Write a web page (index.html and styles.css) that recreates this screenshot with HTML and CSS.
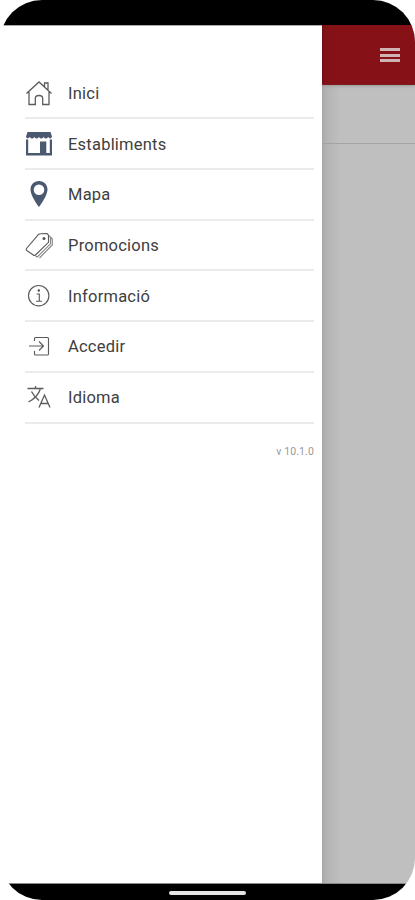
FILE: index.html
```html
<!DOCTYPE html>
<html lang="ca">
<head>
<meta charset="utf-8">
<title>Menú</title>
<link rel="stylesheet" href="styles.css">
</head>
<body>
<div class="phone">
  <div class="status"></div>
  <div class="screen">
    <nav class="drawer">
      <ul class="menu">
        <li><svg viewBox="0 0 28 28"><path d="M1.500 14.500 14 3l12.500 11.500M4 13v12.500h6.300v-6q0-3 3.700-3t3.700 3v6H24V13M19.500 7.500V4h3.500v6.500"/></svg><span>Inici</span></li>
        <li><svg viewBox="0 0 28 28"><path class="solid" d="M2.500 2h23l1.500 4.500q-1.200 3.500-3.800.5-2.400 3-4.600 0-2.300 3-4.600 0-2.300 3-4.600 0-2.200 3-4.600 0-2.600 3-3.800-.5zM1 9.500h2.200v13.500H15V11.500h6.300V23h3.500V9.500H27v16H1z"/></svg><span>Establiments</span></li>
        <li><svg viewBox="0 0 28 28"><path class="solid" fill-rule="evenodd" d="M14 1C8.800 1 5.500 4.800 5.500 9.500 5.500 16 14 27 14 27s8.500-11 8.500-17.500C22.500 4.800 19.200 1 14 1zm0 3.500a5.300 5.300 0 1 1 0 10.600 5.300 5.300 0 0 1 0-10.600z"/></svg><span>Mapa</span></li>
        <li><svg class="thin" viewBox="0 0 28 28"><path d="M1.500 17.500 13.500 3.500q.8-.8 1.700-.8l6.800-.2 1.500 1.800v7L10.500 24q-1 1-2.200 0l-6.500-4.500q-1-.8-.3-2z"/><path class="faint" d="M24 4.500l1.500 1.800v6.500L12.300 26l-1.800-1M26 6.500l1.300 1.500v6L14.500 27"/><circle class="dot" cx="19" cy="7.500" r="1.500"/></svg><span>Promocions</span></li>
        <li><svg class="thin" viewBox="0 0 28 28"><circle cx="13.700" cy="13.700" r="10.200"/><path d="M11.500 12h2.800v7M11 19.200h6"/><circle class="dot" cx="13.800" cy="8.500" r="1.200"/></svg><span>Informació</span></li>
        <li><svg class="thin" viewBox="0 0 28 28"><path d="M9.500 9V6.500q0-1 1-1h12q1 0 1 1v15.500q0 1-1 1h-12q-1 0-1-1v-3M4 14h14.500M14 9.500l4.500 4.500-4.500 4.500"/></svg><span>Accedir</span></li>
        <li><svg viewBox="0 0 28 28"><path d="M2.500 5.500h16M10.500 3v2.500M15.500 5.500Q13 14 3.500 19M6.500 8.500q2.500 5 7.500 9M14 24.500l5.500-12.500L25 24.500M16 20.500h7.200"/></svg><span>Idioma</span></li>
      </ul>
      <div class="version">v 10.1.0</div>
    </nav>
    <main class="page">
      <header><div class="burger"><i></i><i></i><i></i></div></header>
      <div class="filter"></div>
    </main>
  </div>
  <div class="navbar"><div class="handle"></div></div>
</div>
</body>
</html>
```
FILE: styles.css
```css
* { box-sizing: border-box; }
body { margin: 0; background: #fff; font-family: Roboto, sans-serif; }
.phone { width: 415px; height: 900px; border-radius: 42px; overflow: hidden; display: flex; flex-direction: column; }
.status { height: 25px; background: #000; flex: none; }
.screen { flex: 1; display: flex; border-bottom: 1px solid #888; }
.drawer { width: 322px; background: #fff; border-top: 1px solid #aaa; padding: 42.700px 8px 0 25px; }
.menu { list-style: none; margin: 0; padding: 0; }
.menu li { height: 50.700px; border-bottom: 2px solid #ebebeb; display: flex; align-items: center; gap: 15px; color: #404040; font-size: 16.500px; letter-spacing: .22px; }
.menu li span { padding-top: 1px; }
.menu svg { width: 28px; height: 28px; fill: none; stroke: #5c5c5c; stroke-width: 1.300; flex: none; }
.menu .thin { stroke-width: 1.150; }
.menu .faint { stroke: #888; }
.menu .solid { fill: #4a5870; stroke: none; }
.menu .dot { fill: #505050; stroke: none; }
.version { margin-top: 21px; text-align: right; font-size: 10.500px; line-height: 13px; letter-spacing: .1px; color: #999; }
.page { flex: 1; overflow: hidden; background: linear-gradient(90deg, #a9a9a9 0, #b5b5b5 6px, #bfbfbf 18px); }
.page header { height: 60px; background: linear-gradient(90deg, #6f0f13 0, #821116 3px, #861217 18px); border-bottom: 1px solid #7d1a1e; display: flex; justify-content: flex-end; padding: 23px 15px 0 0; box-shadow: 0 1px 3px #999; }
.burger { width: 20px; display: flex; flex-direction: column; gap: 2.500px; }
.burger i { height: 3px; background: #d0b3b4; }
.filter { height: 59px; border-bottom: 1px solid #a3a3a3; }
.navbar { height: 16px; background: #000; display: flex; justify-content: center; padding-top: 7px; flex: none; }
.handle { width: 77px; height: 4px; border-radius: 2px; background: #e5e5e5; }
```
